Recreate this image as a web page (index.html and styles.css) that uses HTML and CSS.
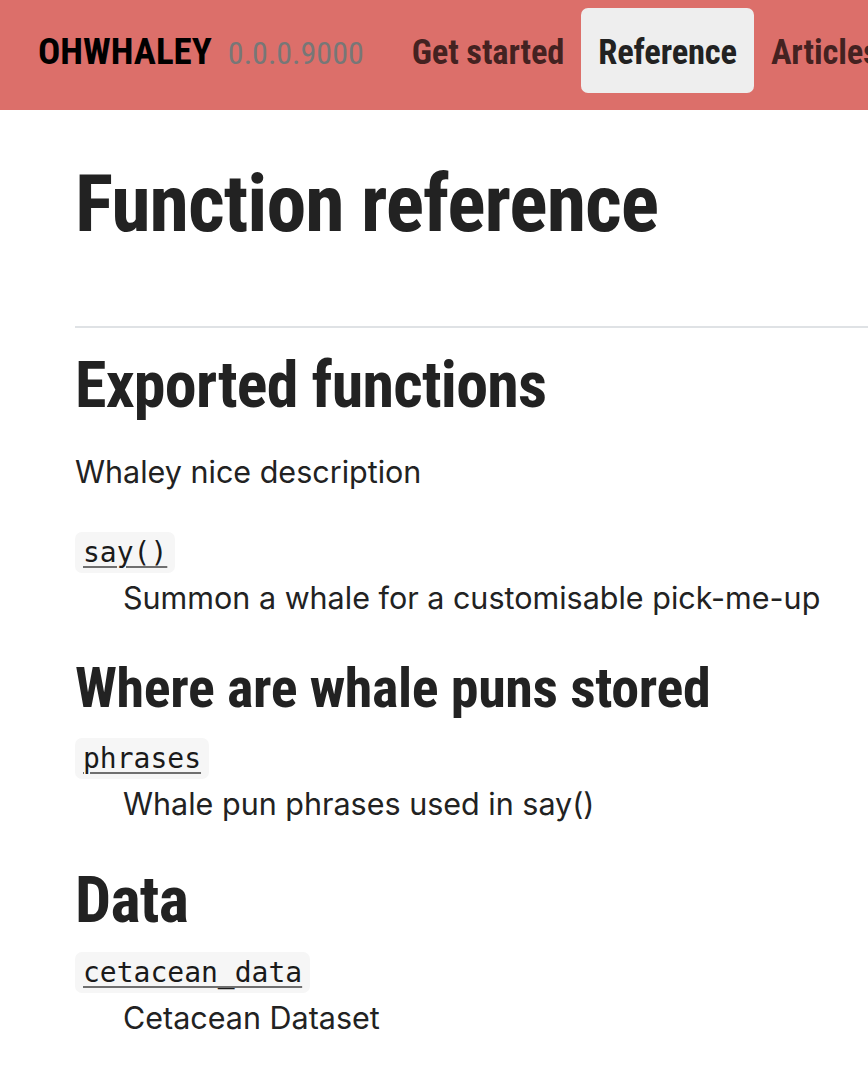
FILE: index.html
```html
<!DOCTYPE html>
<html lang="en">
<head>
<meta charset="utf-8">
<title>Function reference • ohwhaley</title>
<link rel="stylesheet" href="styles.css">
</head>
<body>
<header class="navbar">
  <a class="brand" href="#">OHWHALEY</a>
  <span class="version">0.0.0.9000</span>
  <nav class="nav">
    <a class="nav-link" href="#">Get started</a>
    <a class="nav-link active" href="#">Reference</a>
    <a class="nav-link" href="#">Articles</a>
    <a class="nav-link" href="#">Changelog</a>
  </nav>
</header>
<main class="page">
  <h1 class="title">Function reference</h1>
  <hr class="rule">
  <section class="section">
    <h2 class="section-title">Exported functions</h2>
    <p class="section-desc">Whaley nice description</p>
    <dl class="ref-list">
      <dt class="ref-name"><a class="code-link" href="#">say()</a></dt>
      <dd class="ref-desc">Summon a whale for a customisable pick-me-up</dd>
    </dl>
    <section class="subsection">
      <h3 class="subsection-title">Where are whale puns stored</h3>
      <dl class="ref-list">
        <dt class="ref-name"><a class="code-link" href="#">phrases</a></dt>
        <dd class="ref-desc">Whale pun phrases used in say()</dd>
      </dl>
    </section>
  </section>
  <section class="section">
    <h2 class="section-title">Data</h2>
    <dl class="ref-list">
      <dt class="ref-name"><a class="code-link" href="#">cetacean_data</a></dt>
      <dd class="ref-desc">Cetacean Dataset</dd>
    </dl>
  </section>
</main>
</body>
</html>
```
FILE: styles.css
```css
html, body {
  margin: 0;
  padding: 0;
}
body {
  overflow: hidden;
  background: #fff;
  color: #222;
  font-family: Inter, "Noto Sans", sans-serif;
  font-size: 30.5px;
  line-height: 45px;
}
a {
  color: inherit;
  text-decoration: none;
}

/* navbar */
.navbar {
  display: flex;
  align-items: baseline;
  height: 110px;
  box-sizing: border-box;
  padding: 8px 0 0 38px;
  background: #dc6f6a;
  white-space: nowrap;
  font-family: "Roboto Condensed", Roboto, sans-serif;
  font-size: 37px;
}
.brand {
  color: #000;
  font-weight: 700;
  margin-right: 16px;
}
.version {
  color: #777;
  font-weight: 400;
  font-size: 32px;
  margin-right: 31px;
}
.nav {
  display: flex;
  align-items: baseline;
}
.nav-link {
  display: block;
  height: 85px;
  box-sizing: border-box;
  padding: 6px 17px 2px;
  line-height: 77px;
  font-size: 34.5px;
  letter-spacing: -0.15px;
  font-weight: 700;
  color: rgba(0, 0, 0, 0.7);
  border-radius: 7px;
}
.nav-link.active {
  background: #eee;
  color: #222;
}

/* content */
.page {
  padding: 46px 0 0 75px;
}
.title {
  margin: 0;
  font-family: "Roboto Condensed", Roboto, sans-serif;
  font-weight: 700;
  font-size: 80px;
  line-height: 96px;
  letter-spacing: -1px;
  white-space: nowrap;
}
.rule {
  margin: 74px 0 0;
  border: 0;
  height: 2px;
  background: #dfe2e5;
}
.section {
  margin-top: 36px;
}
.rule + .section {
  margin-top: 19px;
}
.section-title {
  margin: 0 0 13px;
  font-family: "Roboto Condensed", Roboto, sans-serif;
  font-weight: 700;
  font-size: 64px;
  line-height: 77px;
  letter-spacing: -0.75px;
  white-space: nowrap;
}
.subsection {
  margin-top: 35px;
}
.subsection-title {
  margin: 0 0 16px;
  font-family: "Roboto Condensed", Roboto, sans-serif;
  font-weight: 700;
  font-size: 56px;
  line-height: 67px;
  letter-spacing: -0.35px;
  white-space: nowrap;
}
.section-desc {
  margin: 25px 0 38px;
}
.ref-list {
  margin: 0;
}
.ref-name {
  display: flex;
  margin: 0;
}
.code-link {
  font-family: "DejaVu Sans Mono", "Liberation Mono", monospace;
  font-size: 28px;
  line-height: 33px;
  padding: 4px 8px;
  background: #f6f6f6;
  border-radius: 7px;
  color: #1a1a1a;
  text-decoration: underline;
  text-decoration-color: #6f6f6f;
  text-decoration-thickness: 2px;
  text-underline-offset: 4px;
}
.ref-desc {
  margin: 2px 0 0 48px;
  white-space: nowrap;
}
```
